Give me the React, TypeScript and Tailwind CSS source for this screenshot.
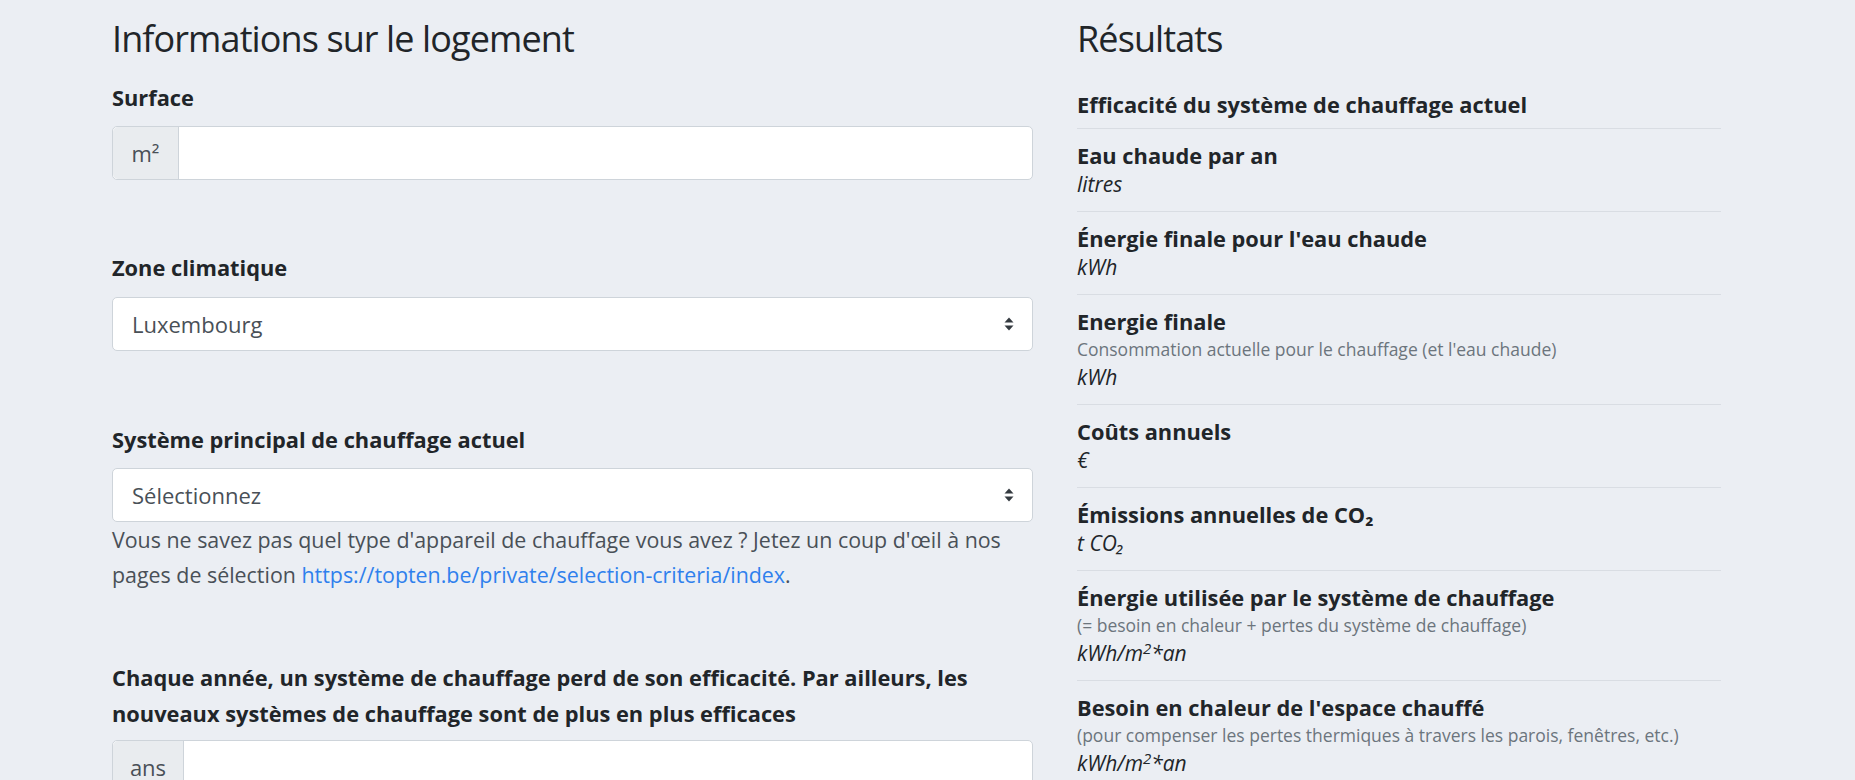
import React from "react";

const font = { fontFamily: '"Open Sans", "Noto Sans", "Liberation Sans", sans-serif' };

function SortIcon() {
  return (
    <svg width="10" height="14" viewBox="0 0 10 14" className="shrink-0">
      <path d="M5 0.5 L9.5 5.5 H0.5 Z" fill="#343a40" />
      <path d="M5 13.5 L9.5 8.5 H0.5 Z" fill="#343a40" />
    </svg>
  );
}

function Select({ value }: { value: string }) {
  return (
    <div className="flex h-[54px] items-center justify-between rounded-[5px] border border-[#ced4da] bg-white pl-[19px] pr-[18px]">
      <span className="text-[22px] text-[#495057]">{value}</span>
      <SortIcon />
    </div>
  );
}

function InputGroup({ addon, addonW }: { addon: string; addonW: string }) {
  return (
    <div className="flex h-[54px] rounded-[5px] border border-[#ced4da] bg-white">
      <div className={`flex items-center justify-center rounded-l-[5px] border-r border-[#ced4da] bg-[#e9ecef] text-[22px] text-[#495057] ${addonW}`}>
        {addon}
      </div>
      <div className="flex-1" />
    </div>
  );
}

type Row = { title: string; note?: string; value?: React.ReactNode };

const sq = (
  <>
    kWh/m<sup className="text-[15px]">2</sup>*an
  </>
);

const rows: Row[] = [
  { title: "Eau chaude par an", value: "litres" },
  { title: "Énergie finale pour l'eau chaude", value: "kWh" },
  { title: "Energie finale", note: "Consommation actuelle pour le chauffage (et l'eau chaude)", value: "kWh" },
  { title: "Coûts annuels", value: "€" },
  { title: "Émissions annuelles de CO₂", value: "t CO₂" },
  { title: "Énergie utilisée par le système de chauffage", note: "(= besoin en chaleur + pertes du système de chauffage)", value: sq },
  { title: "Besoin en chaleur de l'espace chauffé", note: "(pour compenser les pertes thermiques à travers les parois, fenêtres, etc.)", value: sq },
];

export default function App() {
  return (
    <div className="min-h-[780px] w-full overflow-hidden bg-[#ebeef3] text-[#212529]" style={font}>
      <div className="flex gap-[44px] pl-[112px]">
        {/* Left column */}
        <div className="w-[921px] shrink-0">
          <h2 className="mt-[16px] text-[36px] font-medium leading-[46px] tracking-[-0.9px]">Informations sur le logement</h2>

          <div className="mt-[18px]">
            <label className="mb-[10px] block text-[21.8px] font-bold leading-[36px]">Surface</label>
            <InputGroup addon="m²" addonW="w-[66px]" />
          </div>

          <div className="mt-[70px]">
            <label className="mb-[11px] block text-[21.8px] font-bold leading-[36px]">Zone climatique</label>
            <Select value="Luxembourg" />
          </div>

          <div className="mt-[71px]">
            <label className="mb-[10px] block text-[21.8px] font-bold leading-[36px]">Système principal de chauffage actuel</label>
            <Select value="Sélectionnez" />
            <p className="text-[21.4px] leading-[35px] text-[#495057]">
              Vous ne savez pas quel type d'appareil de chauffage vous avez ? Jetez un coup d'œil à nos pages de sélection{" "}
              <a className="text-[#2f80ed]">https://topten.be/private/selection-criteria/index</a>.
            </p>
          </div>

          <div className="mt-[68px]">
            <label className="mb-[8px] block text-[21.8px] font-bold leading-[36px]">
              Chaque année, un système de chauffage perd de son efficacité. Par ailleurs, les nouveaux systèmes de chauffage sont de plus en plus efficaces
            </label>
            <InputGroup addon="ans" addonW="w-[71px]" />
          </div>
        </div>

        {/* Right column */}
        <div className="w-[644px] shrink-0">
          <h2 className="mt-[16px] text-[36px] font-medium leading-[46px] tracking-[-0.9px]">Résultats</h2>
          <div className="mt-[15px]">
            <div className="border-b border-[#d9dde3] pb-[9px] pt-[13px]">
              <div className="text-[21.8px] font-bold leading-[29px]">Efficacité du système de chauffage actuel</div>
            </div>
            {rows.map((r) => (
              <div key={r.title} className="border-b border-[#d9dde3] py-[12px]">
                <div className="text-[21.8px] font-bold leading-[29px]">{r.title}</div>
                {r.note && <div className="text-[17.5px] leading-[27px] text-[#6c757d]">{r.note}</div>}
                <div className="text-[21px] italic leading-[29px]">{r.value}</div>
              </div>
            ))}
          </div>
        </div>
      </div>
    </div>
  );
}
